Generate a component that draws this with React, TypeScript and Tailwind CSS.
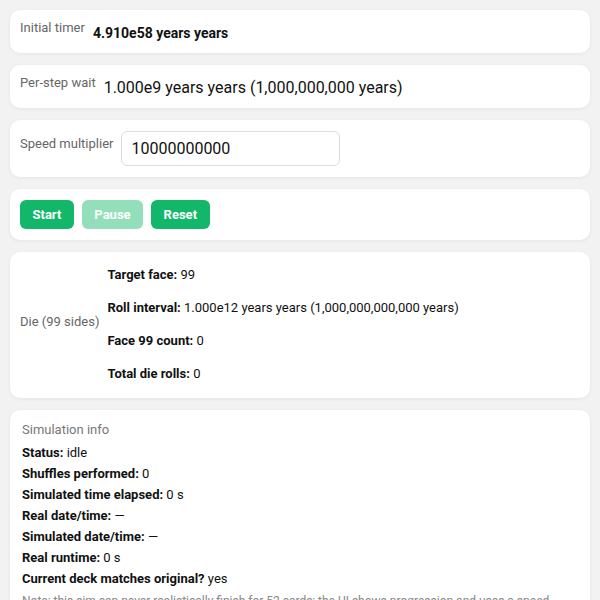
import React from 'react';

function Card({ children, className = '' }: { children: React.ReactNode; className?: string }) {
  return (
    <div className={`bg-white rounded-[10px] shadow-[0_1px_4px_rgba(0,0,0,0.06)] ${className}`}>
      {children}
    </div>
  );
}

function Label({ children }: { children: React.ReactNode }) {
  return <div className="text-[13px] leading-[18px] text-[#666] mb-[9px] shrink-0">{children}</div>;
}

function Btn({ children, disabled = false }: { children: React.ReactNode; disabled?: boolean }) {
  return (
    <button
      className={`h-[29px] px-[12.5px] rounded-[6px] bg-[#12b76a] text-white text-[13px] font-bold ${disabled ? 'opacity-45' : ''}`}
    >
      {children}
    </button>
  );
}

export default function App() {
  const info: [string, string][] = [
    ['Status:', 'idle'],
    ['Shuffles performed:', '0'],
    ['Simulated time elapsed:', '0 s'],
    ['Real date/time:', '—'],
    ['Simulated date/time:', '—'],
    ['Real runtime:', '0 s'],
    ['Current deck matches original?', 'yes'],
  ];

  return (
    <div
      className="min-h-screen bg-[#f2f2f2] p-[10px] flex flex-col gap-[12px] text-[#111]"
      style={{ fontFamily: 'Roboto, "Liberation Sans", sans-serif' }}
    >
      <Card className="flex items-center gap-2 px-[10px] pt-[9px] pb-[7px]">
        <Label>Initial timer</Label>
        <div className="text-[14px] font-bold leading-[20px]">4.910e58 years years</div>
      </Card>

      <Card className="flex items-center gap-2 px-[10px] pt-[9px] pb-[7px]">
        <Label>Per-step wait</Label>
        <div className="text-[16px] leading-[22px]">1.000e9 years years (1,000,000,000 years)</div>
      </Card>

      <Card className="flex items-center gap-2 px-[10px] py-[11px]">
        <Label>Speed multiplier</Label>
        <input
          readOnly
          value="10000000000"
          className="w-[219px] h-[35px] border border-[#ddd] rounded-[6px] px-[9px] text-[16px] text-[#111] outline-none"
        />
      </Card>

      <Card className="flex items-center gap-2 px-[10px] pt-[11px] pb-[11px]">
        <Btn>Start</Btn>
        <Btn disabled>Pause</Btn>
        <Btn>Reset</Btn>
      </Card>

      <Card className="flex items-center gap-2 px-[10px] pt-[13px] pb-[14px]">
        <div className="text-[13px] leading-[18px] text-[#666] shrink-0 mb-[6px]">Die (99 sides)</div>
        <div className="flex flex-col gap-[13px] text-[13px] leading-[20px]">
          <div><b>Target face:</b> 99</div>
          <div><b>Roll interval:</b> 1.000e12 years years (1,000,000,000,000 years)</div>
          <div><b>Face 99 count:</b> 0</div>
          <div><b>Total die rolls:</b> 0</div>
        </div>
      </Card>

      <Card className="px-[12px] pt-[10px] pb-[12px]">
        <div className="text-[13px] leading-[20px] text-[#777] mb-[2px]">Simulation info</div>
        <div className="flex flex-col text-[13px] leading-[21px]">
          {info.map(([k, v]) => (
            <div key={k}>
              <b>{k}</b> {v}
            </div>
          ))}
        </div>
        <div className="text-[12px] leading-[18px] text-[#888] mt-[3px]">
          Note: this sim can never realistically finish for 52 cards; the UI shows progression and uses a speed multiplier so you can watch it run.
        </div>
      </Card>
    </div>
  );
}
